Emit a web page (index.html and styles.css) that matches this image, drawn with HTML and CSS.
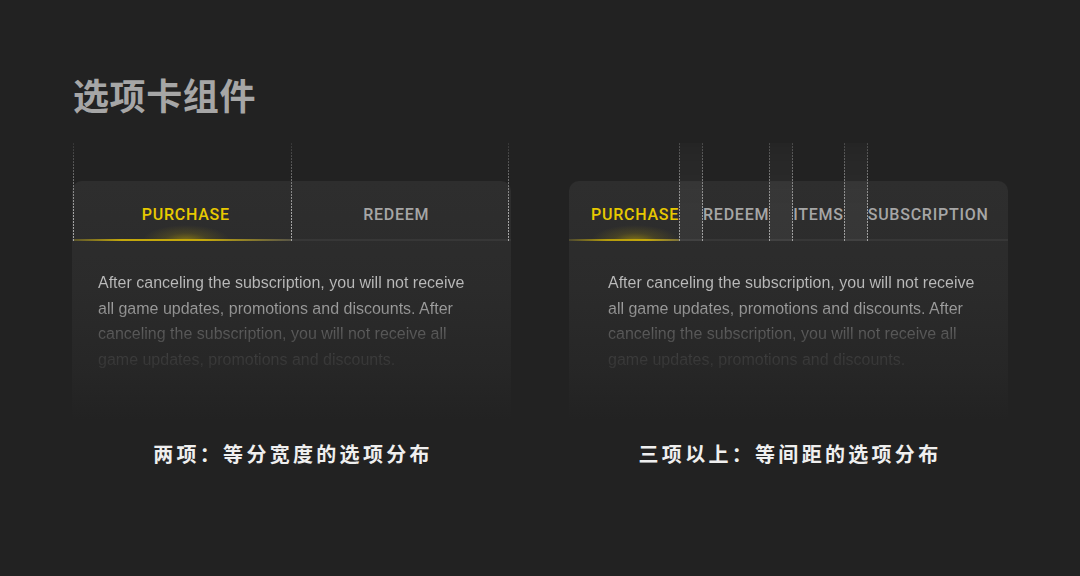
FILE: index.html
```html
<!DOCTYPE html>
<html lang="zh-CN">
<head>
<meta charset="utf-8">
<title>选项卡组件</title>
<link rel="stylesheet" href="styles.css">
</head>
<body>
<main class="page">
  <h1 class="title">选项卡组件</h1>
  <div class="panels">
    <section class="panel">
      <div class="card">
        <div class="tabs tabs--equal">
          <span class="guide" aria-hidden="true"></span>
          <div class="tab is-active">PURCHASE</div>
          <span class="guide" aria-hidden="true"></span>
          <div class="tab">REDEEM</div>
          <span class="guide" aria-hidden="true"></span>
        </div>
        <p class="content content--equal">After canceling the subscription, you will not receive all game updates, promotions and discounts. After canceling the subscription, you will not receive all game updates, promotions and discounts.</p>
      </div>
      <p class="caption">两项：等分宽度的选项分布</p>
    </section>
    <section class="panel">
      <div class="card">
        <div class="tabs tabs--spaced">
          <div class="tab is-active">PURCHASE</div>
          <span class="gap" aria-hidden="true"></span>
          <div class="tab">REDEEM</div>
          <span class="gap" aria-hidden="true"></span>
          <div class="tab">ITEMS</div>
          <span class="gap" aria-hidden="true"></span>
          <div class="tab">SUBSCRIPTION</div>
        </div>
        <p class="content content--spaced">After canceling the subscription, you will not receive all game updates, promotions and discounts. After canceling the subscription, you will not receive all game updates, promotions and discounts.</p>
      </div>
      <p class="caption">三项以上：等间距的选项分布</p>
    </section>
  </div>
</main>
</body>
</html>
```
FILE: styles.css
```css
* { box-sizing: border-box; }
html, body { margin: 0; height: 100%; }
body { background: #222222; overflow: hidden; }

.page { padding-top: 72px; }

.title {
  margin: 0 0 65px 73px;
  font: 700 36px/44px "Noto Sans CJK SC", sans-serif;
  letter-spacing: 0.6px;
  color: #a6a6a6;
}

.panels {
  display: flex;
  gap: 58px;
  padding-left: 72px;
}

.panel {
  width: 439px;
  display: flex;
  flex-direction: column;
  align-items: center;
}

.card {
  width: 100%;
  height: 240px;
  border-radius: 10px 10px 0 0;
  background: linear-gradient(to bottom, #2e2e2e 0%, #2b2b2b 45%, rgba(40, 40, 40, 0.7) 80%, rgba(34, 34, 34, 0) 100%);
}

.tabs {
  display: flex;
  height: 60px;
  background: linear-gradient(#373737, #373737) left bottom / 100% 2px no-repeat;
}

.tabs--equal { padding: 0 2px 0 1px; }

.tab {
  display: flex;
  align-items: center;
  justify-content: center;
  padding-top: 7px;
  font: 500 16px/20px Roboto, "Liberation Sans", sans-serif;
  letter-spacing: 0.75px;
  color: #a6a6a6;
  white-space: nowrap;
}

.tabs--equal .tab { flex: 1 1 0; }
.tabs--equal .tab:first-of-type { padding-left: 7px; }
.tabs--equal .tab:last-of-type { padding-right: 7px; }
.tabs--spaced .tab { flex: none; }
.tabs--spaced .tab:first-child { padding-left: 22px; }

.tab.is-active {
  color: #e8c900;
  background:
    linear-gradient(to right, rgba(200, 175, 10, 0.25) 0%, #c4a80c 22%, #c4a80c 60%, rgba(110, 105, 80, 0.6) 100%) left bottom / 100% 2px no-repeat,
    radial-gradient(ellipse 44px 16px at 50% 100%, rgba(215, 185, 0, 0.5), rgba(215, 185, 0, 0.15) 50%, rgba(215, 185, 0, 0)) center bottom / 100% 100% no-repeat;
  background-origin: padding-box, content-box;
}
.tabs--spaced .tab.is-active {
  background:
    linear-gradient(to right, rgba(200, 175, 10, 0.15) 0%, #b59c0c 35%, #c4a80c 70%, rgba(150, 135, 60, 0.7) 100%) left bottom / 100% 2px no-repeat,
    radial-gradient(ellipse 44px 16px at 50% 100%, rgba(215, 185, 0, 0.5), rgba(215, 185, 0, 0.15) 50%, rgba(215, 185, 0, 0)) center bottom / 100% 100% no-repeat;
  background-origin: padding-box, content-box;
}

.guide {
  flex: none;
  width: 1px;
  margin-top: -38px;
  background: repeating-linear-gradient(to bottom, rgba(185, 185, 185, 0.85) 0 2px, rgba(185, 185, 185, 0) 2px 3px);
  -webkit-mask-image: linear-gradient(to bottom, rgba(0, 0, 0, 0.15), #000 70%);
  mask-image: linear-gradient(to bottom, rgba(0, 0, 0, 0.15), #000 70%);
}

.gap {
  flex: none;
  width: 24px;
  margin-top: -38px;
  background:
    repeating-linear-gradient(to bottom, rgba(185, 185, 185, 0.8) 0 2px, rgba(185, 185, 185, 0) 2px 3px) left top / 1px 100% no-repeat,
    repeating-linear-gradient(to bottom, rgba(185, 185, 185, 0.8) 0 2px, rgba(185, 185, 185, 0) 2px 3px) right top / 1px 100% no-repeat,
    rgba(255, 255, 255, 0.05);
  -webkit-mask-image: linear-gradient(to bottom, rgba(0, 0, 0, 0.3), #000 65%);
  mask-image: linear-gradient(to bottom, rgba(0, 0, 0, 0.3), #000 65%);
}

.content {
  margin: 29px 35px 0 26px;
  font: 16px/25.6px "Liberation Sans", Arial, sans-serif;
  color: transparent;
  background: linear-gradient(to bottom, #c0c0c0 0%, #bcbcbc 12%, #9c9c9c 37%, #575757 62%, #393939 88%, #333333 100%);
  -webkit-background-clip: text;
  background-clip: text;
}
.content--spaced { margin: 29px 22px 0 39px; }

.caption {
  margin: 19px 0 0;
  padding-left: 3px;
  font: 700 20px/28px "Noto Sans CJK SC", sans-serif;
  letter-spacing: 3.3px;
  color: #efefef;
}
```
